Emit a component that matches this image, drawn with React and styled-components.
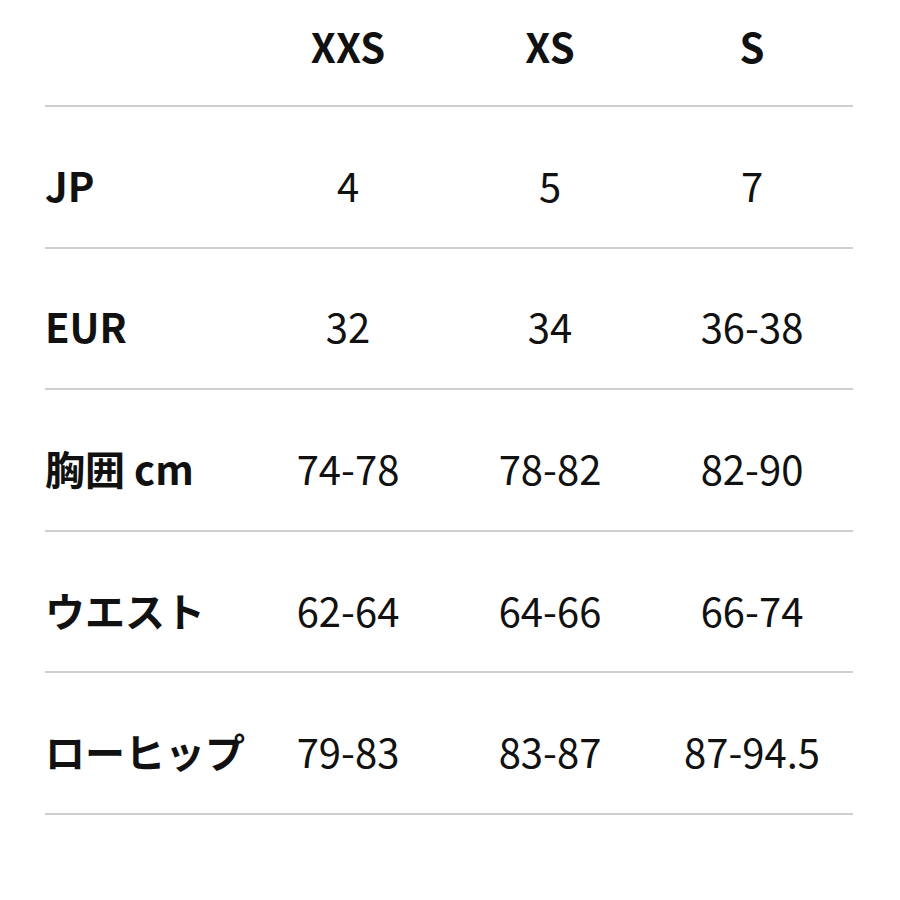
import React from 'react';
import styled, { createGlobalStyle } from 'styled-components';

const GlobalStyle = createGlobalStyle`
  body {
    margin: 0;
    background: #fff;
    font-family: "Noto Sans CJK JP", "Noto Sans", sans-serif;
    color: #111;
  }
`;

const sizes = ['XXS', 'XS', 'S'];

const rows = [
  { label: 'JP', values: ['4', '5', '7'] },
  { label: 'EUR', values: ['32', '34', '36-38'] },
  { label: '胸囲 cm', values: ['74-78', '78-82', '82-90'] },
  { label: 'ウエスト', values: ['62-64', '64-66', '66-74'] },
  { label: 'ローヒップ', values: ['79-83', '83-87', '87-94.5'] },
];

const App = () => (
  <>
    <GlobalStyle />
    <Table>
      <HeaderRow>
        <Cell />
        {sizes.map((s) => (
          <HeadCell key={s}>{s}</HeadCell>
        ))}
      </HeaderRow>
      {rows.map((row) => (
        <Row key={row.label}>
          <Label>{row.label}</Label>
          {row.values.map((v, i) => (
            <Cell key={i}>{v}</Cell>
          ))}
        </Row>
      ))}
    </Table>
  </>
);

export default App;

const Table = styled.div`
  width: 808px;
  margin-left: 45px;
`;

const Row = styled.div`
  display: grid;
  grid-template-columns: repeat(4, 202px);
  align-items: center;
  height: 139.6px;
  box-sizing: content-box;
  border-bottom: 2px solid #cfcfcf;
  & > * {
    padding-top: 16px;
  }
`;

const HeaderRow = styled(Row)`
  height: 105px;
  & > * {
    padding-top: 0;
    padding-bottom: 14px;
  }
`;

const Cell = styled.div`
  text-align: center;
  font-size: 40px;
  line-height: 1;
  font-weight: 400;
`;

const HeadCell = styled(Cell)`
  font-weight: 700;
`;

const Label = styled(Cell)`
  text-align: left;
  font-weight: 700;
`;
